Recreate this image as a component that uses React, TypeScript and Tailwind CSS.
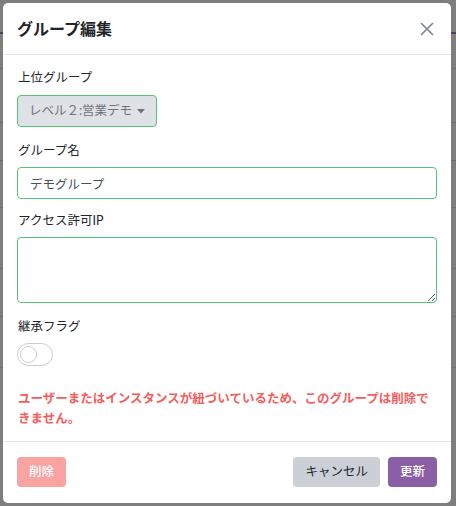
import { useState } from "react";

const CloseIcon = () => (
  <svg width="16" height="16" viewBox="0 0 16 16" fill="none" stroke="#7b838b" strokeWidth="1.6" strokeLinecap="round">
    <path d="M2.5 2.5 L13.5 13.5 M13.5 2.5 L2.5 13.5" />
  </svg>
);

const Caret = () => (
  <svg width="8" height="5" viewBox="0 0 8 5" className="ml-[5px] shrink-0">
    <path d="M0 0 L8 0 L4 4.5 Z" fill="#6c757d" />
  </svg>
);

const App = () => {
  const [inherit, setInherit] = useState(false);

  return (
    <div className="relative w-[456px] h-[506px] overflow-hidden bg-[#7e7e7e] font-['Lato','Noto_Sans_CJK_JP',sans-serif] text-[#212529]">
      {/* page behind the backdrop */}
      <div className="absolute inset-0">
        <div className="absolute left-0 right-0 top-[32px] h-[2px] bg-[#4f3f62]" />
        <div className="absolute left-0 right-0 top-[68px] h-px bg-[#6f6f6f]" />
        <div className="absolute left-0 right-0 top-[122px] h-px bg-[#6f6f6f]" />
        <div className="absolute left-0 right-0 top-[160px] h-px bg-[#6a6a6a]" />
        <div className="absolute left-0 right-0 top-[207px] h-px bg-[#6f6f6f]" />
        <div className="absolute left-0 right-0 top-[268px] h-px bg-[#6f6f6f]" />
        <div className="absolute left-0 right-0 top-[316px] h-px bg-[#6f6f6f]" />
        <div className="absolute left-0 right-0 top-[367px] h-px bg-[#737373]" />
      </div>

      {/* modal */}
      <div className="relative ml-[3px] mt-[3px] w-[448px] rounded-[5px] bg-white">
        <div className="flex items-center justify-between h-[52px] px-[14px] border-b border-[#e3e6e9]">
          <h5 className="text-[16px] font-bold leading-none pt-px">グループ編集</h5>
          <button className="mr-[2px] p-0">
            <CloseIcon />
          </button>
        </div>

        <div className="px-[14px] pt-[14px] pb-[12px] text-[12.5px]">
          <div className="mb-[15px]">
            <div className="leading-[18px] mb-[8px] pl-px">上位グループ</div>
            <button className="flex items-center justify-center whitespace-nowrap h-[32px] w-[140px] rounded-[4px] border border-[#52c274] bg-[#dee1e5] text-[#6c757d]">
              <span>レベル２:営業デモ</span>
              <Caret />
            </button>
          </div>

          <div className="mb-[13px]">
            <div className="leading-[18px] mb-[7px] pl-px">グループ名</div>
            <input
              defaultValue="デモグループ"
              className="block w-full h-[32px] px-[12px] rounded-[4px] border border-[#52c274] text-[#495057] outline-none"
            />
          </div>

          <div className="mb-[15px]">
            <div className="leading-[18px] mb-[7px] pl-px">アクセス許可IP</div>
            <textarea className="block w-full h-[66px] px-[12px] py-[6px] rounded-[4px] border border-[#52c274] outline-none" />
          </div>

          <div>
            <div className="leading-[18px] mb-[7px] pl-px">継承フラグ</div>
            <button
              onClick={() => setInherit(!inherit)}
              className={`flex items-center w-[36px] h-[23px] rounded-full border px-[2px] ${
                inherit ? "bg-[#8a5fa5] border-[#8a5fa5] justify-end" : "bg-white border-[#c9cdd2]"
              }`}
            >
              <span className={`w-[17px] h-[17px] rounded-full border ${inherit ? "bg-white border-white" : "border-[#c9cdd2]"}`} />
            </button>
          </div>

          <p className="mt-[23px] pl-px leading-[20px] font-bold text-[#f55d5d]">
            ユーザーまたはインスタンスが紐づいているため、このグループは削除できません。
          </p>
        </div>

        <div className="flex items-center justify-between px-[14px] pt-[15px] pb-[16px] border-t border-[#e3e6e9] text-[12.5px]">
          <button className="h-[30px] px-[12px] rounded-[4px] bg-[#f9a3a3] text-white font-medium">削除</button>
          <div className="flex gap-[8px]">
            <button className="h-[30px] px-[12px] rounded-[4px] bg-[#cbd0d6] text-[#212529]">キャンセル</button>
            <button className="h-[30px] px-[12px] rounded-[4px] bg-[#8a5fa5] text-white font-medium">更新</button>
          </div>
        </div>
      </div>
    </div>
  );
};

export default App;
